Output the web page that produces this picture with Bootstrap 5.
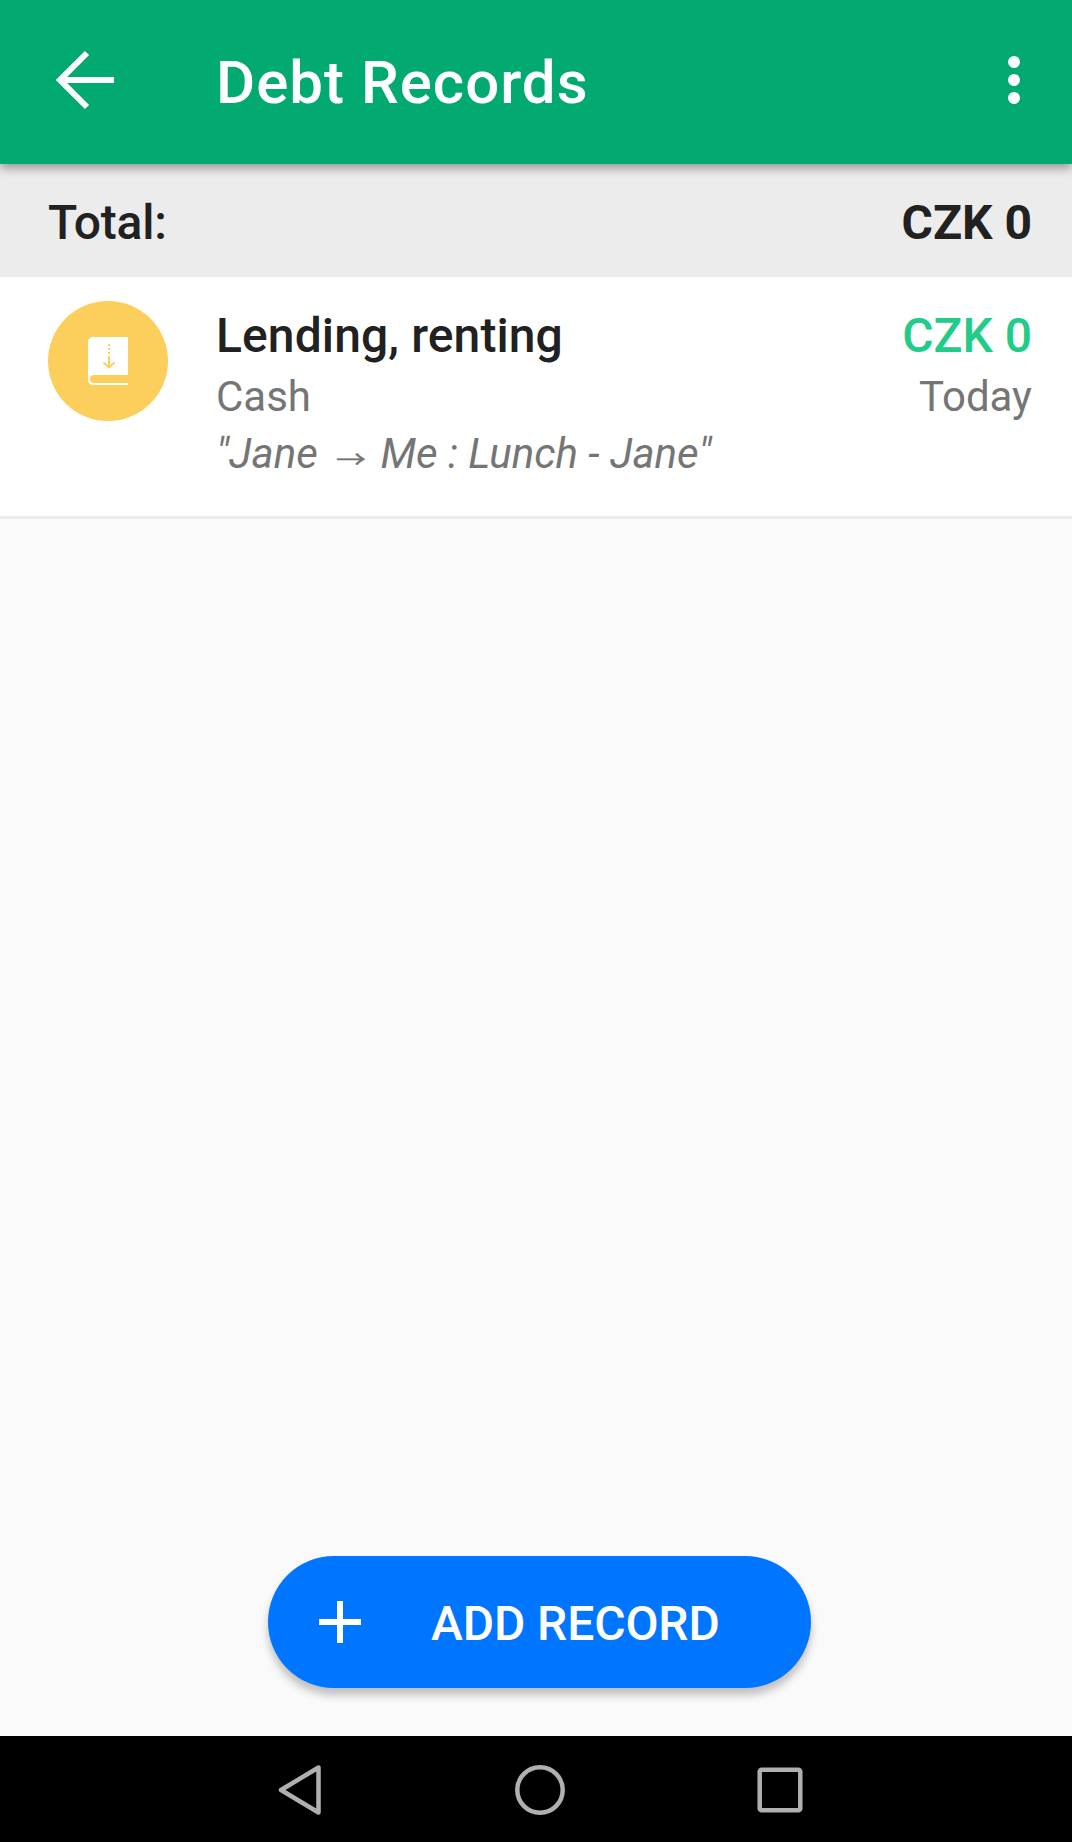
<!DOCTYPE html>
<html lang="en">
<head>
<meta charset="utf-8">
<meta name="viewport" content="width=device-width, initial-scale=1">
<title>Debt Records</title>
<link href="https://cdn.jsdelivr.net/npm/bootstrap@5.3.0/dist/css/bootstrap.min.css" rel="stylesheet">
<style>
body { font-family: Roboto, "Noto Sans", sans-serif; background: #fafafa; color: #212121; }
svg { display: block; flex: none; }
.app-screen { height: 1842px; overflow: hidden; }
.app-header { height: 164px; padding: 0 48px 4px; background: #02aa71; color: #fff; box-shadow: 0 4px 10px rgba(0,0,0,.38); z-index: 1; }
.app-title { font-size: 60px; line-height: 70px; font-weight: 500; letter-spacing: 1px; margin: 5px 0 0 94px; }
.total-row { height: 113px; padding: 5px 40px 0 48px; background: #ececec; font-size: 48px; line-height: 56px; }
.total-label { font-weight: 500; letter-spacing: -.2px; }
.record-row { height: 242px; padding: 24px 40px 0 48px; border-bottom: 3px solid #ececec; background: #fff; }
.record-icon { width: 120px; height: 120px; background: #fccf5c; margin-right: 48px; }
.record-name { font-size: 48px; line-height: 56px; font-weight: 500; margin-top: 7px; letter-spacing: .1px; }
.record-meta { font-size: 42px; line-height: 50px; color: #757575; margin-top: 8px; }
.record-note { font-size: 42px; line-height: 50px; color: #757575; font-style: italic; margin-top: 7px; white-space: nowrap; }
.note-arrow { display: inline-block; font-family: "Noto Sans CJK JP", sans-serif; font-style: normal; font-size: 30px; line-height: 1; margin: 0 4px 0 8px; transform: translateY(3px) scaleY(.8); -webkit-text-stroke: .5px #757575; }
.amount { color: #22cc88; letter-spacing: 0; }
.add-btn { width: 543px; height: 132px; padding: 0 0 0 51px; margin: 0 auto 48px 268px; background: #0075ff; color: #fff; border: 0; font-size: 48px; line-height: 56px; font-weight: 500; box-shadow: 0 7px 8px rgba(0,0,0,.24); }
.add-btn span { margin: 3px 0 0 70px; letter-spacing: -.1px; }
.system-nav { height: 106px; background: #000; padding: 2px 0 0 270px; gap: 180px; }
</style>
<script src="https://cdn.jsdelivr.net/npm/bootstrap@5.3.0/dist/js/bootstrap.bundle.min.js"></script>
</head>
<body>
<div class="app-screen d-flex flex-column">
  <header class="app-header d-flex align-items-center position-relative">
    <svg width="74" height="72" viewBox="0 0 74 72" fill="none" stroke="#fff" stroke-width="6"><path d="M39 9 12 36 39 63M12 36H66"/></svg>
    <h1 class="app-title">Debt Records</h1>
    <svg class="ms-auto" width="20" height="60" viewBox="0 0 20 60" fill="#fff"><circle cx="10" cy="12" r="6"/><circle cx="10" cy="30" r="6"/><circle cx="10" cy="48" r="6"/></svg>
  </header>
  <section class="total-row d-flex justify-content-between align-items-center">
    <span class="total-label">Total:</span>
    <span class="fw-bold">CZK 0</span>
  </section>
  <main class="flex-grow-1 d-flex flex-column">
    <article class="record-row d-flex align-items-start">
      <div class="record-icon rounded-circle d-flex align-items-center justify-content-center flex-shrink-0">
        <svg width="42" height="50" viewBox="0 0 42 50"><path d="M6 1H41V39H7a4 4 0 0 0 0 8H41v2H6a5 5 0 0 1-5-5V6a5 5 0 0 1 5-5z" fill="#fff"/><path d="M22 8v2M22 12v2M22 16v2M22 20v12M16.500 26.500l5.500 5 5.500-5" fill="none" stroke="#fccf5c" stroke-width="2"/></svg>
      </div>
      <div class="flex-grow-1">
        <div class="record-name">Lending, renting</div>
        <div class="record-meta">Cash</div>
        <div class="record-note">"Jane <span class="note-arrow">→</span> Me : Lunch - Jane"</div>
      </div>
      <div class="text-end">
        <div class="record-name amount">CZK 0</div>
        <div class="record-meta">Today</div>
      </div>
    </article>
    <button class="add-btn btn rounded-pill d-flex align-items-center mt-auto" type="button">
      <svg width="42" height="42" viewBox="0 0 42 42" stroke="#fff" stroke-width="6"><path d="M21 0v42M0 21h42"/></svg>
      <span>ADD RECORD</span>
    </button>
  </main>
  <nav class="system-nav d-flex align-items-center">
    <svg width="60" height="60" viewBox="0 0 60 60" fill="none" stroke="#b0b0b0" stroke-width="4.500" stroke-linejoin="round"><path d="M48.500 7.500V52.500L11 30z"/></svg>
    <svg width="60" height="60" viewBox="0 0 60 60" fill="none" stroke="#b0b0b0" stroke-width="4.500"><circle cx="30" cy="30" r="22.700"/></svg>
    <svg width="60" height="60" viewBox="0 0 60 60" fill="none" stroke="#b0b0b0" stroke-width="4.500"><rect x="9.700" y="9.700" width="40.600" height="40.600" rx="2"/></svg>
  </nav>
</div>
</body>
</html>
